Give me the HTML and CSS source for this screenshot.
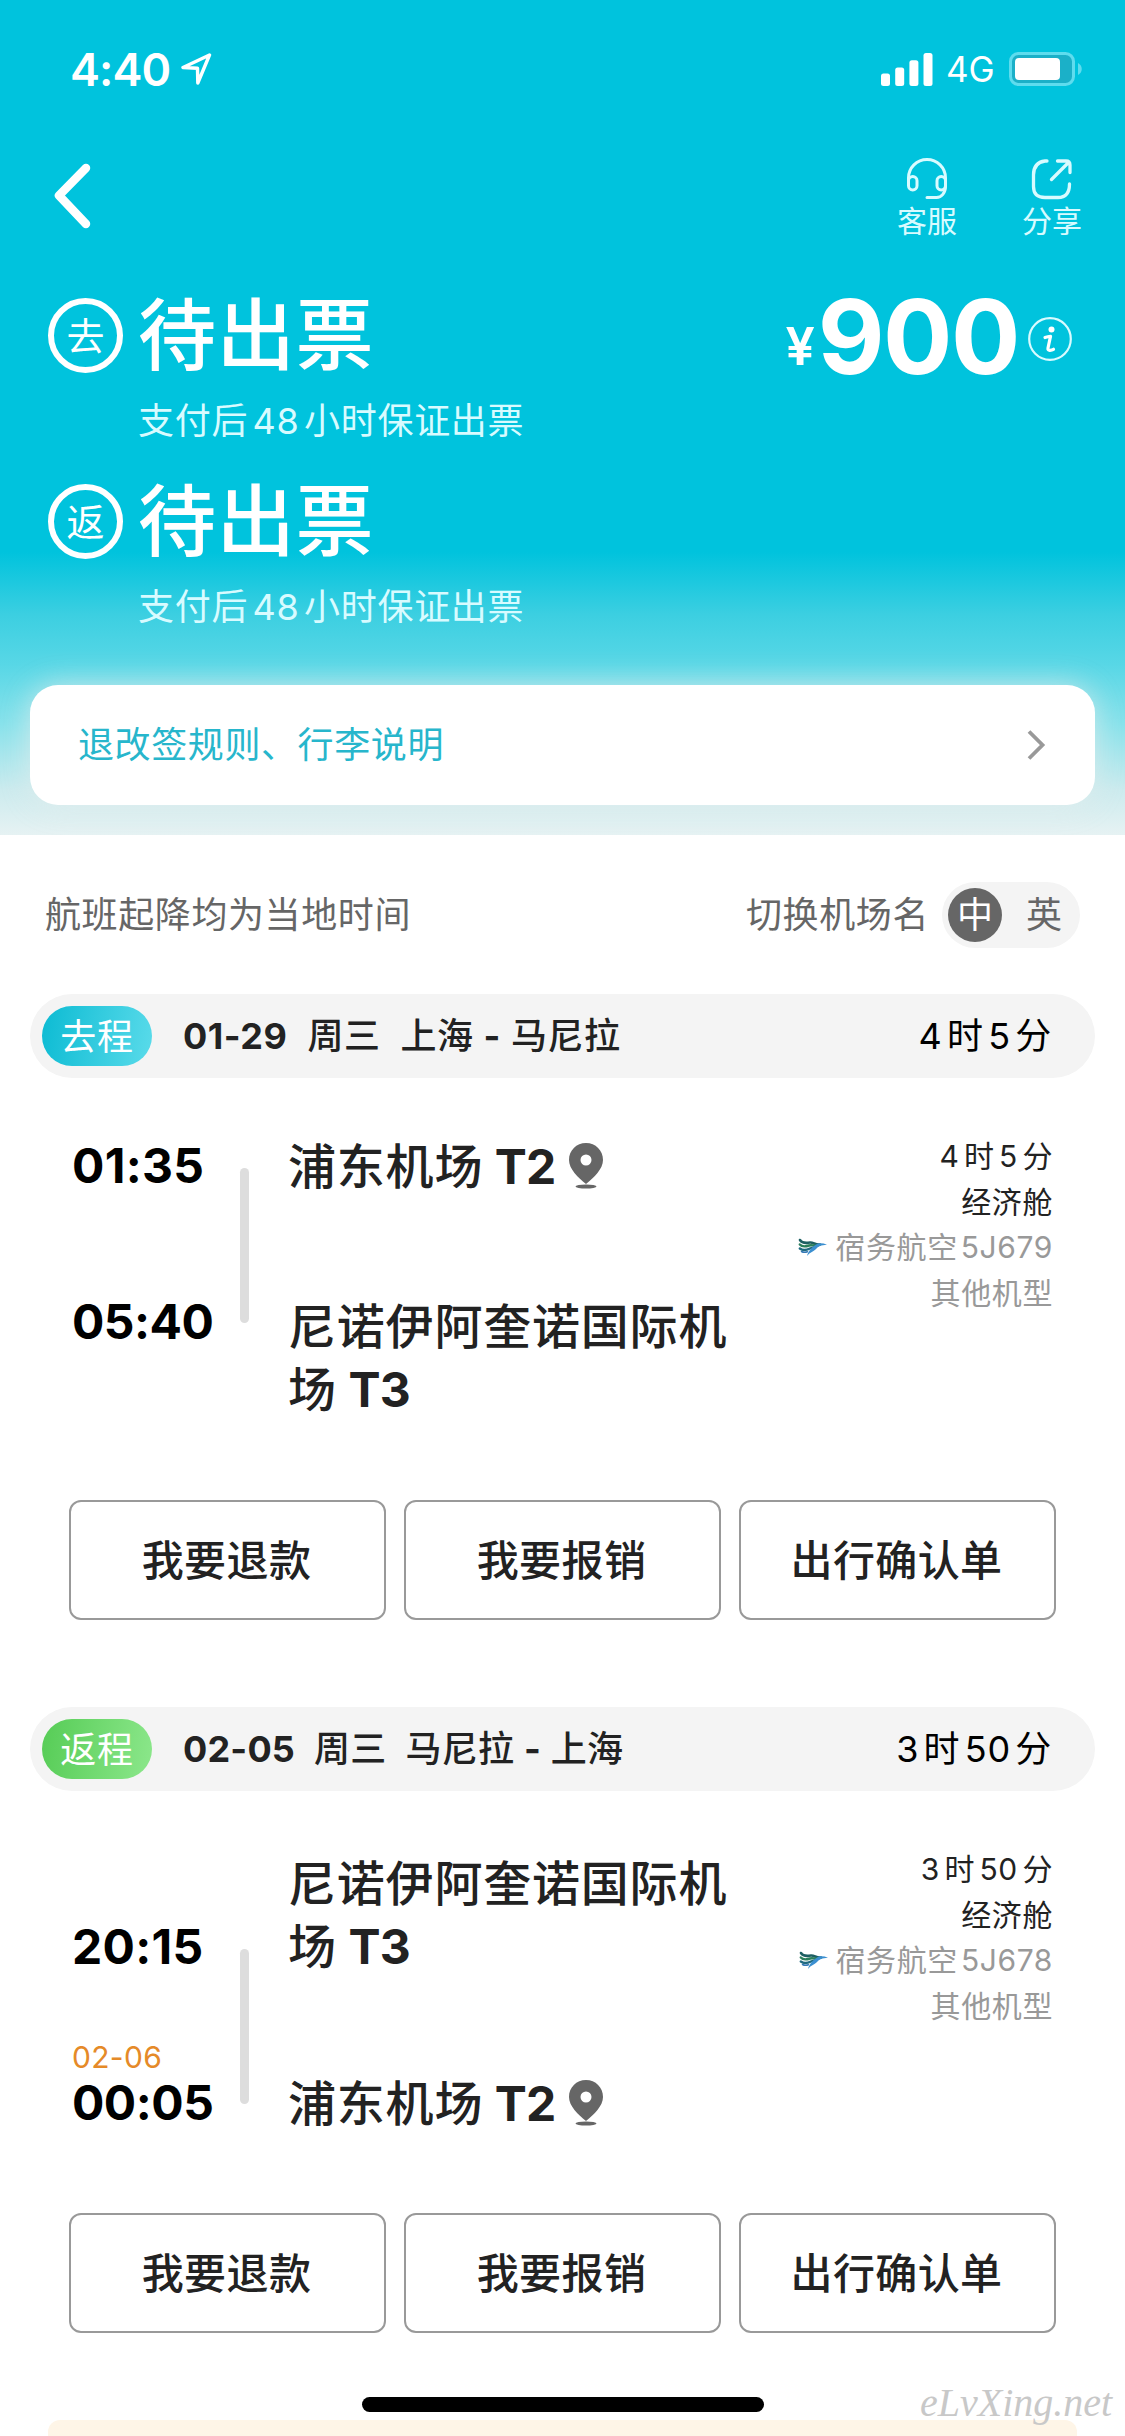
FILE: index.html
```html
<!DOCTYPE html>
<html lang="zh-CN">
<head>
<meta charset="utf-8">
<title>订单详情</title>
<link rel="stylesheet" href="styles.css">
</head>
<body>
<svg class="defs" width="0" height="0" aria-hidden="true">
  <symbol id="pin" viewBox="0 0 34 46">
    <path fill="#666" fill-rule="evenodd" d="M17 0C7.400 0 0 7.400 0 17c0 9 9 17.500 17 24 8-6.500 17-15 17-24C34 7.400 26.600 0 17 0zm0 11.500a5.500 5.500 0 1 1 0 11 5.500 5.500 0 0 1 0-11z"/>
    <ellipse cx="17" cy="43.500" rx="10.500" ry="2" fill="#666"/>
  </symbol>
  <symbol id="bird" viewBox="0 0 29 18">
    <path fill="none" stroke="#1d5f62" stroke-width="2.600" stroke-linecap="round" d="M2 2c2 3.500 7 3 10 2.500s6 3 10 2"/>
    <path fill="none" stroke="#2c7f5c" stroke-width="2.400" stroke-linecap="round" d="M1.800 6.500C4 9 8 8.500 11 7.500s6 1 9-.5"/>
    <path fill="none" stroke="#1f6a80" stroke-width="2.400" stroke-linecap="round" d="M1.800 10.500C5 13 9 12 12 10.500s5 0 8-3.500"/>
    <path fill="#3b8fd0" d="M9 18c1-5 6-10 11-12.500 3-.5 6 0 9 1.200-6 .3-9 1.800-11 4.300-2 2.500-6 3-9 7z"/>
    <path fill="none" stroke="#3478b5" stroke-width="1.500" stroke-linecap="round" d="M3.500 13.500c2 1.200 4 1 6 .3"/>
  </symbol>
</svg>
<div class="screen">
  <header class="hero">
    <div class="status-bar">
      <span class="clock">4:40</span>
      <svg class="location" width="31" height="32" viewBox="0 0 31 32"><path d="M28.500 2 2 14.500l14.500.8L16.800 30z" fill="none" stroke="#fff" stroke-width="3.400" stroke-linejoin="round"/></svg>
      <svg class="signal" width="52" height="33" viewBox="0 0 52 33" fill="#fff"><rect y="20.500" width="9" height="12.500" rx="2.500"/><rect x="14.200" y="14.500" width="9" height="18.500" rx="2.500"/><rect x="28.400" y="7.300" width="9" height="25.700" rx="2.500"/><rect x="42.500" width="9" height="33" rx="2.500"/></svg>
      <span class="network">4G</span>
      <svg class="battery" width="74" height="34" viewBox="0 0 74 34"><rect x="1.500" y="1.500" width="63" height="31" rx="8" fill="#1bb0c8" stroke="#5edcee" stroke-width="3"/><rect x="6" y="6" width="45" height="22" rx="4" fill="#fff"/><path d="M69 11c5 2.500 5 9.500 0 12z" fill="#5edcee"/></svg>
    </div>
    <nav class="nav">
      <svg width="38" height="66" viewBox="0 0 38 66"><path d="M33 5 6 32.500 33 61" fill="none" stroke="#fff" stroke-width="8.500" stroke-linecap="round" stroke-linejoin="round"/></svg>
      <div class="nav-actions">
        <div class="nav-action">
          <svg width="42" height="42" viewBox="0 0 42 42" fill="none" stroke="#d8fbff" stroke-width="3" stroke-linecap="round"><path d="M2.500 25.500V20a18.500 18.500 0 0 1 37 0v8c0 7-4 11.500-9 11.500H21"/><rect x="2.500" y="18.500" width="8.500" height="13.500" rx="4.200"/><rect x="31" y="18.500" width="8.500" height="13.500" rx="4.200"/></svg>
          <span>客服</span>
        </div>
        <div class="nav-action">
          <svg width="42" height="42" viewBox="0 0 42 42" fill="none" stroke="#d8fbff" stroke-width="3.300" stroke-linecap="round" stroke-linejoin="round"><path d="M16 3h-2Q2.500 4.500 2.500 17v11.500Q2.500 39.500 14 39.500h13Q38.500 39.500 38.500 26M26.500 3H35q4 0 4 4v7.500M37 5 20.500 21.500"/></svg>
          <span>分享</span>
        </div>
      </div>
    </nav>
    <div class="summary">
      <div class="states">
        <div class="state">
          <span class="state-mark">去</span>
          <div><h1 class="state-title">待出票</h1><p class="state-note">支付后<span class="num">48</span>小时保证出票</p></div>
        </div>
        <div class="state">
          <span class="state-mark">返</span>
          <div><h1 class="state-title">待出票</h1><p class="state-note">支付后<span class="num">48</span>小时保证出票</p></div>
        </div>
      </div>
      <div class="price">
        <span class="currency">¥</span><span class="amount">900</span>
        <svg width="44" height="44" viewBox="0 0 44 44"><circle cx="22" cy="22" r="20.800" fill="none" stroke="#d8fbff" stroke-width="2.200"/><circle cx="23.500" cy="12.500" r="3" fill="#fff"/><path d="M17 20.500q3-1 5.500-1.200L20 31q-.5 2.500 2 2.300 2-.1 3.500-1" fill="none" stroke="#fff" stroke-width="3.200" stroke-linecap="round" stroke-linejoin="round"/></svg>
      </div>
    </div>
    <div class="rules">
      <span>退改签规则、行李说明</span>
      <svg width="20" height="32" viewBox="0 0 20 32"><path d="M3 2.500 16.500 16 3 29.500" fill="none" stroke="#999" stroke-width="3.800"/></svg>
    </div>
  </header>

  <div class="notice">
    <span>航班起降均为当地时间</span>
    <div class="switch">
      <span>切换机场名</span>
      <div class="toggle"><span class="toggle-on">中</span><span class="toggle-off">英</span></div>
    </div>
  </div>

  <section class="trip">
    <div class="trip-bar">
      <span class="tag tag-out">去程</span>
      <div class="trip-title"><span class="latin">01-29</span><span>周三</span><span>上海 <span class="latin">-</span> 马尼拉</span></div>
      <span class="trip-duration">4<span class="num">时</span>5<span class="num-l">分</span></span>
    </div>
    <div class="flight">
      <div class="times times-out"><span class="time time-narrow">01:35</span><span class="time">05:40</span></div>
      <div class="track track-out"></div>
      <div class="airports airports-out">
        <p>浦东机场 <span class="terminal">T2</span><svg class="pin" width="34" height="46"><use href="#pin"/></svg></p>
        <p>尼诺伊阿奎诺国际机场 <span class="terminal">T3</span></p>
      </div>
      <div class="details">
        <p>4<span class="num">时</span>5<span class="num-l">分</span></p>
        <p>经济舱</p>
        <p class="muted"><svg class="bird" width="29" height="18"><use href="#bird"/></svg>宿务航空<span class="flight-no">5J679</span></p>
        <p class="muted">其他机型</p>
      </div>
    </div>
    <div class="actions"><span class="button">我要退款</span><span class="button">我要报销</span><span class="button">出行确认单</span></div>
  </section>

  <section class="trip">
    <div class="trip-bar">
      <span class="tag tag-back">返程</span>
      <div class="trip-title trip-title-back"><span class="latin">02-05</span><span>周三</span><span>马尼拉 <span class="latin">-</span> 上海</span></div>
      <span class="trip-duration">3<span class="num">时</span>50<span class="num-l">分</span></span>
    </div>
    <div class="flight">
      <div class="times times-back"><span class="time time-narrow">20:15</span><span class="next-day">02-06</span><span class="time">00:05</span></div>
      <div class="track track-back"></div>
      <div class="airports airports-back">
        <p>尼诺伊阿奎诺国际机场 <span class="terminal">T3</span></p>
        <p>浦东机场 <span class="terminal">T2</span><svg class="pin" width="34" height="46"><use href="#pin"/></svg></p>
      </div>
      <div class="details">
        <p>3<span class="num">时</span>50<span class="num-l">分</span></p>
        <p>经济舱</p>
        <p class="muted"><svg class="bird" width="29" height="18"><use href="#bird"/></svg>宿务航空<span class="flight-no">5J678</span></p>
        <p class="muted">其他机型</p>
      </div>
    </div>
    <div class="actions"><span class="button">我要退款</span><span class="button">我要报销</span><span class="button">出行确认单</span></div>
  </section>

  <div class="tip-card"></div>
  <div class="home-indicator"></div>
  <div class="watermark">eLvXing.net</div>
</div>
</body>
</html>
```
FILE: styles.css
```css
* { box-sizing: border-box; }
html, body { margin: 0; background: #fff; }
body { font-family: Inter, "Noto Sans CJK SC", sans-serif; color: #222; }
p, h1 { margin: 0; }
svg { display: block; flex: none; }
.defs { position: absolute; }
.screen { position: relative; width: 1125px; height: 2436px; overflow: hidden; }

.hero {
  height: 835px;
  overflow: hidden;
  color: #fff;
  background: linear-gradient(#00c3dd 0, #00c3dd 552px, #3ccfe1 615px, #58d7e6 665px, #88e2eb 725px, #ccebee 790px, #e6f2f3 835px);
}
.status-bar { display: flex; align-items: center; height: 138px; padding: 0 42px 0 70px; }
.clock { width: 111px; font-size: 45px; font-weight: 600; letter-spacing: -.9px; }
.signal { margin-left: auto; }
.network { width: 61px; padding-left: 13px; font-size: 35px; font-weight: 400; }
.battery { margin-left: 15px; }

.nav { display: flex; justify-content: space-between; align-items: flex-start; height: 160px; padding: 20px 43px 0 53px; }
.nav > svg { margin-top: 5px; }
.nav-actions { display: flex; gap: 65px; }
.nav-action { display: flex; flex-direction: column; align-items: center; font-size: 30px; line-height: 43px; color: #d8fbff; }

.summary { display: flex; justify-content: space-between; align-items: flex-start; height: 387px; padding: 0 53px 0 48px; }
.state { display: flex; height: 186px; }
.state-mark {
  display: flex; align-items: center; justify-content: center;
  width: 75px; height: 75px; margin-right: 15px;
  border: 6px solid #fff; border-radius: 50%;
  font-size: 38px; line-height: 60px;
}
.state-title { font-size: 78px; line-height: 75px; font-weight: 500; letter-spacing: .8px; }
.state-note { margin-top: 28px; font-size: 36px; line-height: 40px; letter-spacing: .7px; color: #d8fbff; }
.num { margin: 0 4.500px; }
.num-l { margin-left: 4.500px; }
.flight-no { margin-left: 3px; }
.price { display: flex; align-items: center; height: 77px; }
.currency { margin-top: 21px; font-size: 52px; font-weight: 600; line-height: 50px; }
.amount { margin: 0 9px 0 3px; font-size: 103px; line-height: 77px; font-weight: 700; letter-spacing: -1.500px; }
.price svg { margin-top: 5px; }

.rules {
  display: flex; align-items: center; justify-content: space-between;
  height: 120px; margin: 0 30px; padding: 0 49px 0 48px;
  border-radius: 28px; background: #fff; color: #27b6cc;
  font-size: 36px; letter-spacing: .6px;
  box-shadow: 0 0 30px rgba(226, 236, 236, .8);
}
.rules span { margin-bottom: 1px; line-height: 44px; }

.notice { display: flex; align-items: center; justify-content: space-between; height: 160px; margin-bottom: -1px; padding: 0 45px; font-size: 36px; line-height: 44px; letter-spacing: .6px; color: #666; }
.switch { display: flex; align-items: center; gap: 13px; }
.toggle { display: flex; align-items: center; justify-content: space-between; width: 138px; height: 66px; padding: 0 18px 0 6px; border-radius: 33px; background: #f4f4f4; letter-spacing: 0; }
.toggle-on { width: 54px; height: 54px; border-radius: 50%; background: #666; color: #fff; text-align: center; line-height: 55px; }
.toggle-off { line-height: 55px; }

.trip { height: 713px; }
.trip-bar { display: flex; align-items: center; height: 84px; margin: 0 30px; padding: 0 43px 0 12px; border-radius: 42px; background: #f4f4f4; font-size: 36px; line-height: 62px; letter-spacing: .7px; }
.tag { width: 110px; height: 60px; border-radius: 30px; text-align: center; color: #fff; }
.tag-out { background: linear-gradient(100deg, #0cbbd3, #5adbea); }
.tag-back { background: linear-gradient(100deg, #56cc56, #8ce78b); }
.trip-title { display: flex; gap: 20px; margin-left: 31px; font-weight: 500; letter-spacing: .5px; }
.trip-title-back { gap: 19px; letter-spacing: .2px; }
.latin { font-weight: 700; }
.trip-duration { margin-left: auto; color: #000; }

.flight { display: flex; height: 422px; padding: 0 72px; }
.times { display: flex; flex-direction: column; width: 168px; color: #000; }
.time { font-size: 48px; line-height: 60px; font-weight: 700; letter-spacing: -.5px; }
.time-narrow { letter-spacing: .3px; }
.times-out { padding-top: 58px; gap: 96px; }
.times-back { padding-top: 126px; }
.next-day { margin-top: 64px; font-size: 30px; line-height: 33px; letter-spacing: .3px; color: #e58a28; }
.times-back .time:last-child { margin-top: -1px; }
.track { width: 9px; height: 155px; border-radius: 5px; background: #ddd; }
.track-out { margin-top: 90px; }
.track-back { margin-top: 158px; }
.airports { width: 450px; margin-left: 39px; font-size: 48px; line-height: 63px; font-weight: 500; letter-spacing: .8px; }
.airports p { display: flow-root; }
.airports-out { padding-top: 57px; }
.airports-out p + p { margin-top: 97px; }
.airports-back { padding-top: 61px; }
.airports-back p + p { margin-top: 94px; }
.airports p { word-spacing: -2px; }
.terminal { font-weight: 700; letter-spacing: -.8px; }
.pin { display: inline-block; margin-left: 13px; vertical-align: -5px; }
.details { flex: 1; padding-top: 56px; text-align: right; font-size: 30px; line-height: 45.500px; letter-spacing: .6px; white-space: nowrap; }
.muted { color: #999; }
.bird { display: inline-block; margin-right: 8px; vertical-align: 2px; }

.actions { display: grid; grid-template-columns: repeat(3, 1fr); gap: 18px; padding: 0 69px; }
.button { height: 120px; padding-right: 2px; border: 2px solid #999; border-radius: 12px; text-align: center; font-size: 42px; line-height: 117px; font-weight: 500; letter-spacing: .4px; }

.tip-card { height: 30px; margin: 0 48px; border-radius: 12px 12px 0 0; background: #fef5e7; }
.home-indicator { position: absolute; left: 362px; top: 2397px; width: 402px; height: 15px; border-radius: 8px; background: #000; }
.watermark { position: absolute; left: 920px; top: 2378px; font: italic 40px/50px "Liberation Serif", serif; color: #c8c8c8; }
```
